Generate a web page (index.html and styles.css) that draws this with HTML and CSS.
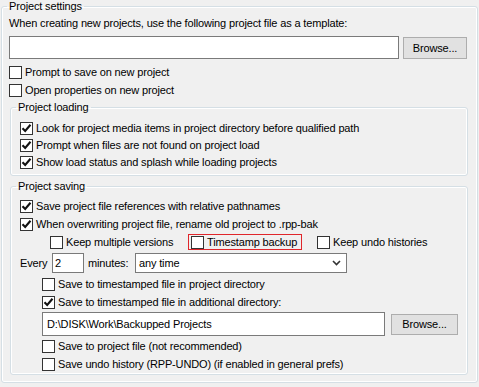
FILE: index.html
```html
<!DOCTYPE html>
<html lang="en">

<head>
    <meta charset="UTF-8">
    <title>Project settings</title>
    <link rel="stylesheet" href="styles.css">
</head>

<body>
    <fieldset class="group outer">
        <legend>Project settings</legend>

        <div class="text-row">When creating new projects, use the following project file as a template:</div>
        <div class="file-row">
            <div class="textbox template"></div>
            <button type="button" class="btn browse-top">Browse...</button>
        </div>
        <label class="check row"><span class="box"></span>Prompt to save on new project</label>
        <label class="check row"><span class="box"></span>Open properties on new project</label>

        <fieldset class="group loading">
            <legend>Project loading</legend>
            <label class="check row-s"><span class="box on"></span>Look for project media items in project directory before qualified path</label>
            <label class="check row-s"><span class="box on"></span>Prompt when files are not found on project load</label>
            <label class="check row-s"><span class="box on"></span>Show load status and splash while loading projects</label>
        </fieldset>

        <fieldset class="group saving">
            <legend>Project saving</legend>
            <label class="check row"><span class="box on"></span>Save project file references with relative pathnames</label>
            <label class="check row"><span class="box on"></span>When overwriting project file, rename old project to .rpp-bak</label>
            <div class="row bak-options">
                <label class="check multi"><span class="box"></span>Keep multiple versions</label>
                <label class="check stamp"><span class="box"></span>Timestamp backup</label>
                <label class="check undo"><span class="box"></span>Keep undo histories</label>
            </div>
            <div class="every-row">
                <span class="every">Every</span>
                <div class="textbox minutes">2</div>
                <span class="every-unit">minutes:</span>
                <div class="select">
                    <span>any time</span>
                    <svg width="9" height="6" viewBox="0 0 9 6"><path d="M1 1 L4.5 4.5 L8 1" fill="none" stroke="#333" stroke-width="1.6"/></svg>
                </div>
            </div>
            <label class="check row sub"><span class="box"></span>Save to timestamped file in project directory</label>
            <label class="check row sub"><span class="box on"></span>Save to timestamped file in additional directory:</label>
            <div class="path-row">
                <div class="textbox path">D:\DISK\Work\Backupped Projects</div>
                <button type="button" class="btn browse-path">Browse...</button>
            </div>
            <label class="check row sub"><span class="box"></span>Save to project file (not recommended)</label>
            <label class="check row sub"><span class="box"></span>Save undo history (RPP-UNDO) (if enabled in general prefs)</label>
        </fieldset>
    </fieldset>

    <script>
        // tick marks for checked boxes
        document.querySelectorAll('.box.on').forEach((box) => {
            box.innerHTML = '<svg width="11" height="11" viewBox="0 0 11 11"><path d="M1.5 5.2 L4.2 8 L9.5 1.8" fill="none" stroke="#111" stroke-width="2.1"/></svg>';
        });
    </script>
</body>

</html>
```

FILE: styles.css
```css
* {
    box-sizing: border-box;
}

body {
    margin: 0;
    width: 479px;
    height: 387px;
    background-color: #f0f0f0;
    color: #000;
    font-family: "Liberation Sans", Arial, sans-serif;
    font-size: 11px;
    line-height: 13px;
    letter-spacing: -0.15px;
    overflow: hidden;
}

.group {
    margin: 0;
    border: 1px solid #d5dfe5;
    border-radius: 3px;
    box-shadow: inset 0 0 0 1px #fff;
    min-width: 0;
}

.group legend {
    padding: 0 2px;
    line-height: 13px;
}

.outer {
    margin: 0 1px;
    padding: 4px 9px 7px 7px;
}

.outer > legend {
    margin-left: -2px;
}

.loading,
.saving {
    margin-left: 1px;
    padding: 6px 4px 4px 9px;
}

.loading > legend,
.saving > legend {
    margin-left: -4px;
}

.loading {
    margin-top: 2px;
}

.saving {
    margin-top: 4px;
    padding-top: 4px;
    padding-bottom: 1px;
}

.text-row {
    height: 13px;
    white-space: nowrap;
}

.file-row {
    display: flex;
    align-items: center;
    margin-top: 6px;
    height: 23px;
}

.textbox {
    background-color: #fff;
    border: 1px solid #7a7a7a;
    display: flex;
    align-items: center;
    padding-left: 3px;
    white-space: nowrap;
}

.template {
    width: 390px;
    height: 23px;
}

.btn {
    font-family: inherit;
    font-size: 11px;
    letter-spacing: inherit;
    color: #000;
    background-color: #e1e1e1;
    border: 1px solid #adadad;
    border-radius: 0;
    padding: 0;
}

.browse-top {
    width: 64px;
    height: 22px;
    margin-left: 4px;
}

.check {
    display: flex;
    align-items: center;
    white-space: nowrap;
}

.box {
    width: 13px;
    height: 13px;
    flex-shrink: 0;
    border: 1px solid #333;
    background-color: #fff;
    margin-right: 3px;
    display: flex;
    align-items: center;
    justify-content: center;
}

.row {
    height: 18px;
}

.outer > .row:first-of-type {
    margin-top: 4px;
}

.row-s {
    height: 17px;
}

.bak-options {
    display: flex;
    align-items: center;
    padding-left: 30px;
}

.multi {
    width: 138px;
}

.stamp {
    width: 114px;
    height: 16px;
    border: 1px solid #e0262b;
    padding-left: 2px;
}

.undo {
    margin-left: 15px;
}

.every-row {
    display: flex;
    align-items: center;
    height: 24px;
}

.every {
    width: 32px;
}

.minutes {
    width: 32px;
    height: 20px;
    padding-left: 2px;
}

.every-unit {
    margin-left: 4px;
    width: 47px;
}

.select {
    width: 212px;
    height: 20px;
    background-color: #fff;
    border: 1px solid #7a7a7a;
    display: flex;
    align-items: center;
    justify-content: space-between;
    padding: 0 5px 0 3px;
}

.sub {
    padding-left: 22px;
}

.path-row {
    display: flex;
    align-items: center;
    height: 26px;
    padding-left: 22px;
}

.path {
    width: 343px;
    height: 24px;
    padding-left: 4px;
}

.browse-path {
    width: 67px;
    height: 21px;
    margin-left: 6px;
}
```
